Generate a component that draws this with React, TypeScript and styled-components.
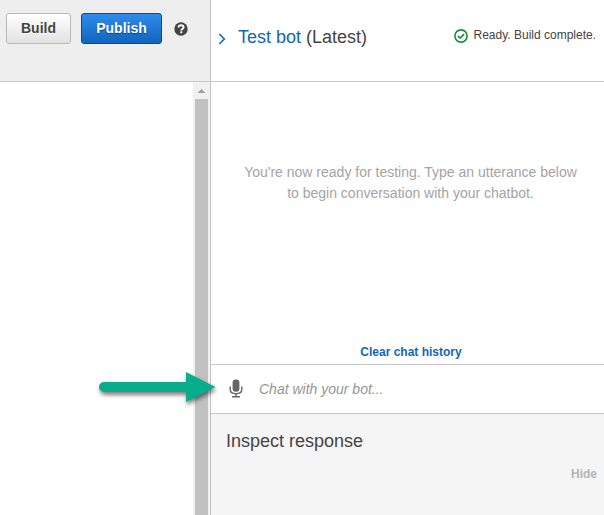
import React from "react";
import styled, { createGlobalStyle } from "styled-components";

const GlobalStyle = createGlobalStyle`
  * { box-sizing: border-box; }
  body {
    margin: 0;
    overflow: hidden;
    background: #fff;
    color: #444;
    font-family: "Liberation Sans", Arial, sans-serif;
  }
`;

const Page = styled.div`
  position: relative;
  display: grid;
  grid-template-columns: 210px 1fr;
  width: 604px;
  height: 515px;
  overflow: hidden;
`;

const Editor = styled.section`
  display: flex;
  flex-direction: column;
`;

const Toolbar = styled.header`
  display: flex;
  align-items: flex-start;
  height: 82px;
  padding: 13px 0 0 6px;
  background: #eee;
  border-bottom: 1px solid #c9c9c9;
`;

const Button = styled.button<{ $primary?: boolean }>`
  width: ${(p) => (p.$primary ? 81 : 65)}px;
  height: 31px;
  margin: 0 10px 0 0;
  padding: 0 0 1px;
  border: 1px solid ${(p) => (p.$primary ? "#0c4a8c" : "#b9b9b9")};
  border-radius: 3px;
  background: ${(p) =>
    p.$primary
      ? "linear-gradient(#2f8ceb, #1065bd)"
      : "linear-gradient(#ffffff, #e2e2e2)"};
  color: ${(p) => (p.$primary ? "#fff" : "#444")};
  text-shadow: ${(p) => (p.$primary ? "0 1px 1px #0b4380" : "0 1px 0 #fff")};
  font: bold 14px "Liberation Sans", Arial, sans-serif;
`;

const HelpIcon = styled.svg`
  margin: 9px 0 0 2px;
`;

const Canvas = styled.div`
  flex: 1;
  display: flex;
  justify-content: flex-end;
`;

const ScrollTrack = styled.div`
  width: 17px;
  display: flex;
  flex-direction: column;
  align-items: center;
  background: #f1f1f1;
`;

const ScrollArrow = styled.svg`
  flex: none;
`;

const ScrollThumb = styled.div`
  width: 13px;
  flex: 1;
  background: #c1c1c1;
`;

const BotPanel = styled.aside`
  display: flex;
  flex-direction: column;
  border-left: 1px solid #c4c4c4;
`;

const PanelHeader = styled.header`
  display: flex;
  justify-content: space-between;
  height: 82px;
  padding: 26px 8px 0 7px;
  border-bottom: 1px solid #c9c9c9;
`;

const TitleGroup = styled.div`
  display: flex;
  align-items: flex-start;
  gap: 12px;
`;

const Chevron = styled.svg`
  margin-top: 7px;
`;

const Title = styled.h1`
  margin: 0;
  font-size: 18px;
  font-weight: 400;
  line-height: 22px;
  white-space: nowrap;
`;

const BotName = styled.span`
  color: #1166bb;
`;

const Status = styled.div`
  display: flex;
  gap: 5px;
  height: 20px;
  font-size: 12px;
  line-height: 18px;
  white-space: nowrap;
`;

const StatusIcon = styled.svg`
  margin-top: 3px;
`;

const Conversation = styled.div`
  flex: none;
  display: flex;
  flex-direction: column;
  justify-content: space-between;
  align-items: center;
  height: 283px;
  padding: 80px 0 4px;
  border-bottom: 1px solid #c6c6c6;
`;

const Hint = styled.p`
  margin: 0;
  padding-left: 6px;
  width: 370px;
  color: #a4a4a4;
  font-size: 14px;
  line-height: 21px;
  text-align: center;
`;

const ClearLink = styled.a`
  margin-left: 7px;
  color: #1166bb;
  font-size: 12px;
  font-weight: 700;
  line-height: 15px;
`;

const Composer = styled.div`
  display: flex;
  align-items: center;
  gap: 16px;
  height: 49px;
  padding-left: 18px;
  border-bottom: 1px solid #c6c6c6;
`;

const ChatInput = styled.input`
  width: 300px;
  padding: 0;
  border: 0;
  outline: 0;
  background: transparent;
  font: italic 14px "Liberation Sans", Arial, sans-serif;
  &::placeholder { color: #969696; opacity: 1; }
`;

const Inspector = styled.section`
  flex: 1;
  display: flex;
  flex-direction: column;
  padding: 16px 7px 0 15px;
  background: #f5f5f5;
`;

const InspectorTitle = styled.h2`
  margin: 0;
  font-size: 18px;
  font-weight: 400;
  line-height: 22px;
`;

const HideButton = styled.a`
  align-self: flex-end;
  margin-top: 15px;
  color: #b4b4b4;
  font-size: 12px;
  font-weight: 700;
  line-height: 15px;
`;

const Callout = styled.svg`
  position: absolute;
  left: 94px;
  top: 366px;
  filter: drop-shadow(1px 3px 2px rgba(0, 0, 0, 0.5));
`;

export default function App() {
  return (
    <>
      <GlobalStyle />
      <Page>
        <Editor>
          <Toolbar>
            <Button>Build</Button>
            <Button $primary>Publish</Button>
            <HelpIcon width="14" height="14" viewBox="0 0 14 14">
              <circle cx="7" cy="7" r="6.7" fill="#444" />
              <path
                d="M4.6 5.5C4.7 3.9 5.7 3.2 7.1 3.2c1.5 0 2.5.8 2.5 2 0 1.8-2.3 1.7-2.3 3.3"
                fill="none"
                stroke="#fff"
                strokeWidth="1.9"
              />
              <rect x="6.3" y="9.3" width="2" height="1.9" fill="#fff" />
            </HelpIcon>
          </Toolbar>
          <Canvas>
            <ScrollTrack>
              <ScrollArrow width="17" height="17" viewBox="0 0 17 17">
                <path d="M4.5 11L8.5 7L12.5 11Z" fill="#a0a0a0" />
              </ScrollArrow>
              <ScrollThumb />
            </ScrollTrack>
          </Canvas>
        </Editor>

        <BotPanel>
          <PanelHeader>
            <TitleGroup>
              <Chevron width="8" height="12" viewBox="0 0 8 12">
                <path d="M1.3 1L6.3 6L1.3 11" fill="none" stroke="#1166bb" strokeWidth="1.6" />
              </Chevron>
              <Title>
                <BotName>Test bot</BotName> (Latest)
              </Title>
            </TitleGroup>
            <Status>
              <StatusIcon width="14" height="14" viewBox="0 0 14 14" fill="none" stroke="#1d8a3e">
                <circle cx="7" cy="7" r="6.1" strokeWidth="1.6" />
                <path d="M3.8 6.8L6.2 9.1L10.1 5.1" strokeWidth="1.6" />
              </StatusIcon>
              Ready. Build complete.
            </Status>
          </PanelHeader>

          <Conversation>
            <Hint>
              You're now ready for testing. Type an utterance below
              <br />
              to begin conversation with your chatbot.
            </Hint>
            <ClearLink>Clear chat history</ClearLink>
          </Conversation>

          <Composer>
            <svg width="14" height="20" viewBox="0 0 14 20">
              <rect x="3.6" y="0.4" width="6.8" height="12.4" rx="3" fill="#666" />
              <path
                d="M1.2 7.5v2.7C1.2 12.9 3.2 14.7 7 14.7s5.8-1.8 5.8-4.5V7.5M7 14.5v3.2M3 17.8h8"
                fill="none"
                stroke="#666"
                strokeWidth="1.4"
              />
            </svg>
            <ChatInput placeholder="Chat with your bot..." />
          </Composer>

          <Inspector>
            <InspectorTitle>Inspect response</InspectorTitle>
            <HideButton>Hide</HideButton>
          </Inspector>
        </BotPanel>

        <Callout width="130" height="44" viewBox="0 0 130 44">
          <path
            d="M10 16H92V6L121.5 21L92 36V26H10A5 5 0 0 1 10 16Z"
            fill="#08ae8c"
          />
        </Callout>
      </Page>
    </>
  );
}
